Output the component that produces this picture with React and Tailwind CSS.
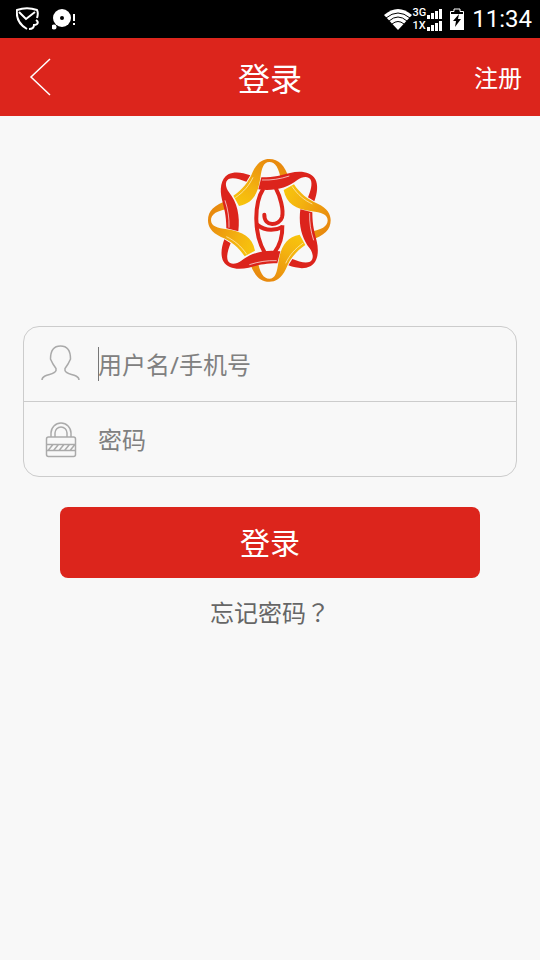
const Ribbon = ({ d, stripe, fill, edge }) => (
  <>
    {[0, 90, 180, 270].map((angle) => (
      <g key={angle} transform={`rotate(${angle} 208 211)`}>
        <path d={d} fill={fill} />
        <path d={stripe} fill="none" stroke={edge} strokeWidth="2" />
      </g>
    ))}
  </>
);

const Logo = () => (
  <svg viewBox="21 21 378 378" className="size-[126px]" role="img" aria-label="Logo">
    <defs>
      <linearGradient id="gold" x1="0" y1="1" x2="0.6" y2="0">
        <stop offset="0" stopColor="#f8c80c" />
        <stop offset="0.4" stopColor="#f4b410" />
        <stop offset="1" stopColor="#e88a0e" />
      </linearGradient>
    </defs>
    <Ribbon
      fill="url(#gold)"
      edge="#fff6d8"
      d="M100 137C126 120 146 96 158 66C172 36 190 27 208 27C236 27 254 45 268 88L244 98C238 52 225 36 208 36C190 36 185 56 181 84C174 132 158 160 117 168Z"
      stripe="M106 143C131 126 148 106 159 82"
    />
    <Ribbon
      fill="#dc241c"
      edge="#fff"
      d="M184 82C225 82 245 75 270 69C300 62 332 64 346 88C355 106 352 130 343 154L324 142C332 122 338 102 332 89C324 76 306 80 292 90C262 114 222 124 175 118Z"
      stripe="M186 90C215 91 240 87 268 78"
    />
    <g fill="none" stroke="#dc241c" strokeWidth="12">
      <path d="M190 116C162 160 160 250 195 310" />
      <path d="M228 116C240 138 252 180 246 202C238 228 192 232 193 194" strokeLinecap="round" />
      <path d="M170 223C195 243 220 245 249 230" />
      <path d="M247 226C248 260 238 288 223 308" />
    </g>
  </svg>
);

const UserIcon = () => (
  <svg viewBox="0 0 40 36" className="mb-0.5 h-9 w-10" fill="none" stroke="#aaa" strokeWidth="1.5" aria-hidden="true">
    <path d="M1 35C1 33 2 32 4 31C8 29 14 29 15 25.5V23.5L12 19L9.5 14C9.5 7 12 1 19.5 1S29.5 7 29.5 14L27 19L24 23.5V25.5C25 29 31 29 35 31C37 32 38 33 38 35" />
  </svg>
);

const LockIcon = () => (
  <svg viewBox="0 0 32 36" className="mt-0.5 h-9 w-8" fill="none" stroke="#aaa" strokeWidth="1.5" aria-hidden="true">
    <rect x="1.5" y="15" width="29" height="19.5" rx="2" />
    <path d="M6 15V11A10 10 0 0 1 26 11V15M10 15V11A6 6 0 0 1 22 11V15M1.5 22.5H30.5M1.5 28.5H30.5M3 28.5L8 22.5M8.5 28.5L13.5 22.5M14 28.5L19 22.5M19.5 28.5L24.5 22.5M25 28.5L30 22.5" />
  </svg>
);

const StatusBar = () => (
  <div className="flex h-[38px] items-center justify-between bg-black pr-2 pl-4 text-white">
    <div className="flex items-center gap-3">
      <svg viewBox="0 0 24 24" className="size-6" fill="none" stroke="#fff" strokeWidth="2" aria-hidden="true">
        <path d="M21 11C22 8 22 5 21 3C15 1 7 1 1 3C0 11 4 18 11 22" />
        <path d="M3 5L10 12L19 5" />
        <path d="M13 22C17 22 18 20 18 18C22 18 23 15 20 13" />
      </svg>
      <svg viewBox="0 0 26 22" className="h-[22px] w-[26px]" fill="#fff" aria-hidden="true">
        <circle cx="10" cy="10" r="9" />
        <circle cx="10" cy="10" r="2" fill="#000" />
        <circle cx="2" cy="19" r="2.5" />
        <path d="M21 6H23V13H21ZM21 15H23V17H21Z" />
      </svg>
    </div>
    <div className="flex items-center">
      <svg viewBox="0 0 28 22" className="h-[22px] w-7" aria-hidden="true">
        <path d="M0 7Q14 -5 28 7L14 22Z" fill="#fff" />
        <path d="M2 10Q14 0 26 10M5 13Q14 5 23 13M8 16Q14 11 20 16" fill="none" stroke="#000" strokeWidth="1" />
      </svg>
      <div className="flex flex-col font-['Roboto',sans-serif] text-[11px] leading-[13px] font-medium">
        <span>3G</span>
        <span>1X</span>
      </div>
      <svg viewBox="0 0 16 24" className="h-6 w-4" fill="#fff" aria-hidden="true">
        <path d="M1 8H4V12H1ZM5 6H8V12H5ZM9 4H12V12H9ZM13 2H16V12H13ZM1 20H4V24H1ZM5 18H8V24H5ZM9 16H12V24H9ZM13 14H16V24H13Z" />
      </svg>
      <svg viewBox="0 0 14 22" className="ml-2 h-[22px] w-3.5" aria-hidden="true">
        <path d="M0.5 7V3.5H4V1H10V3.5H13.5V7" fill="none" stroke="#fff" strokeWidth="1" />
        <path d="M0 6H14V22H0Z" fill="#fff" />
        <path d="M9 6L3 13H6L5 19L11 11H8Z" fill="#000" />
      </svg>
      <time className="ml-2 font-['Roboto',sans-serif] text-2xl">11:34</time>
    </div>
  </div>
);

const Field = ({ id, label, type, icon, focused }) => (
  <div>
    <div className="flex h-[74px] items-center">
      <label htmlFor={id} className="flex w-[74px] shrink-0 justify-center" aria-label={label}>
        {icon}
      </label>
      <div className="relative min-w-0 flex-1">
        {focused && <span className="absolute inset-y-0 left-0 w-px bg-[#777]" />}
        <input
          id={id}
          type={type}
          placeholder={label}
          className="block h-[34px] w-full bg-transparent text-2xl text-[#333] outline-none placeholder:text-[#808080]"
        />
      </div>
    </div>
  </div>
);

export default function App() {
  return (
    <div className="min-h-screen bg-[#f8f8f8] font-['Noto_Sans','Noto_Sans_CJK_SC',sans-serif]">
      <StatusBar />
      <header className="grid h-[78px] grid-cols-3 items-center bg-[#dc251c] text-white">
        <button type="button" aria-label="返回" className="ml-7 w-6">
          <svg viewBox="0 0 24 40" className="h-10 w-6" fill="none" stroke="#fff" strokeWidth="1.5" aria-hidden="true">
            <path d="M22 2L3 20L22 38" />
          </svg>
        </button>
        <h1 className="pt-1 text-center text-[32px] leading-10">登录</h1>
        <button type="button" className="mr-[18px] justify-self-end pt-0.5 text-2xl">注册</button>
      </header>
      <main>
        <div className="flex justify-center pt-[41px]">
          <Logo />
        </div>
        <form onSubmit={(event) => event.preventDefault()}>
          <div className="mx-[23px] mt-[43px] divide-y divide-[#ccc] rounded-2xl border border-[#ccc]">
            <Field id="username" label="用户名/手机号" type="text" icon={<UserIcon />} focused />
            <Field id="password" label="密码" type="password" icon={<LockIcon />} />
          </div>
          <button type="submit" className="mx-[60px] mt-[30px] flex h-[71px] w-[calc(100%-120px)] items-center justify-center rounded-lg bg-[#dc251c] text-3xl text-white">
            登录
          </button>
        </form>
        <div className="mt-[18px] text-center">
          <a href="#forgot" className="text-2xl text-[#666]">
            忘记密码<span lang="zh-TW" className="font-['Noto_Sans_CJK_TC',sans-serif]">？</span>
          </a>
        </div>
      </main>
    </div>
  );
}
